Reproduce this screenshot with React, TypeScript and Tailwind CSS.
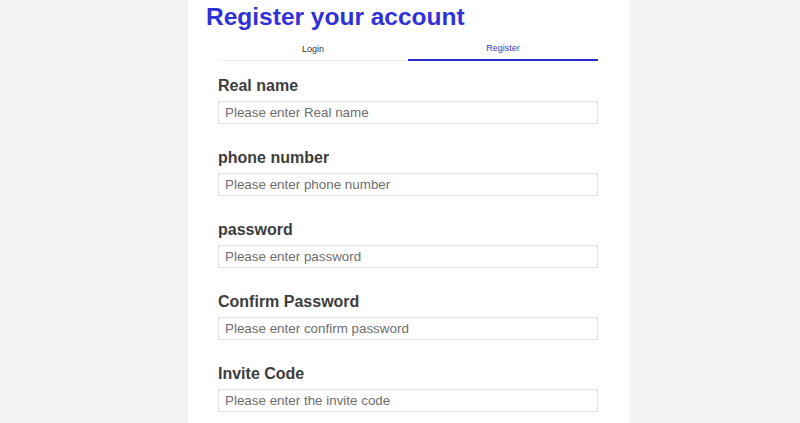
const FIELDS = [
  { label: 'Real name', placeholder: 'Please enter Real name', type: 'text' },
  { label: 'phone number', placeholder: 'Please enter phone number', type: 'tel' },
  { label: 'password', placeholder: 'Please enter password', type: 'password' },
  { label: 'Confirm Password', placeholder: 'Please enter confirm password', type: 'password' },
  { label: 'Invite Code', placeholder: 'Please enter the invite code', type: 'text' },
]

export default function App() {
  return (
    <div className="min-h-screen bg-[#f4f4f4] font-['Liberation_Sans',Arial,sans-serif]">
      <div className="ml-[188px] w-[441px] min-h-screen bg-white">
        {/* Heading */}
        <h1 className="pl-[18px] text-[24.5px] leading-[33px] font-bold text-[#3131d9]">
          Register your account
        </h1>

        {/* Tabs */}
        <div className="mt-[4px] ml-[30px] mr-[31px] flex">
          <div className="flex-1 h-[24px] pt-[2px] flex items-center justify-center border-b border-[#f0f0f0] text-[9px] text-[#333]">
            Login
          </div>
          <div className="flex-1 h-[24px] pt-[2px] flex items-center justify-center border-b-2 border-[#2b2bc7] text-[9px] text-[#3b3bc9]">
            Register
          </div>
        </div>

        {/* Form */}
        <form className="pt-[15px] pl-[30px] pr-[31px] flex flex-col gap-[24px]">
          {FIELDS.map((f) => (
            <div key={f.label} className="flex flex-col">
              <label className="text-[16px] leading-[20px] font-bold text-[#3d3d3d]">
                {f.label}
              </label>
              <input
                type={f.type}
                placeholder={f.placeholder}
                className="mt-[5px] h-[23px] w-full border border-[#e3e3e3] px-[6px] text-[13.4px] text-[#333] placeholder:text-[#6e6e6e] outline-none"
              />
            </div>
          ))}
        </form>
      </div>
    </div>
  )
}
